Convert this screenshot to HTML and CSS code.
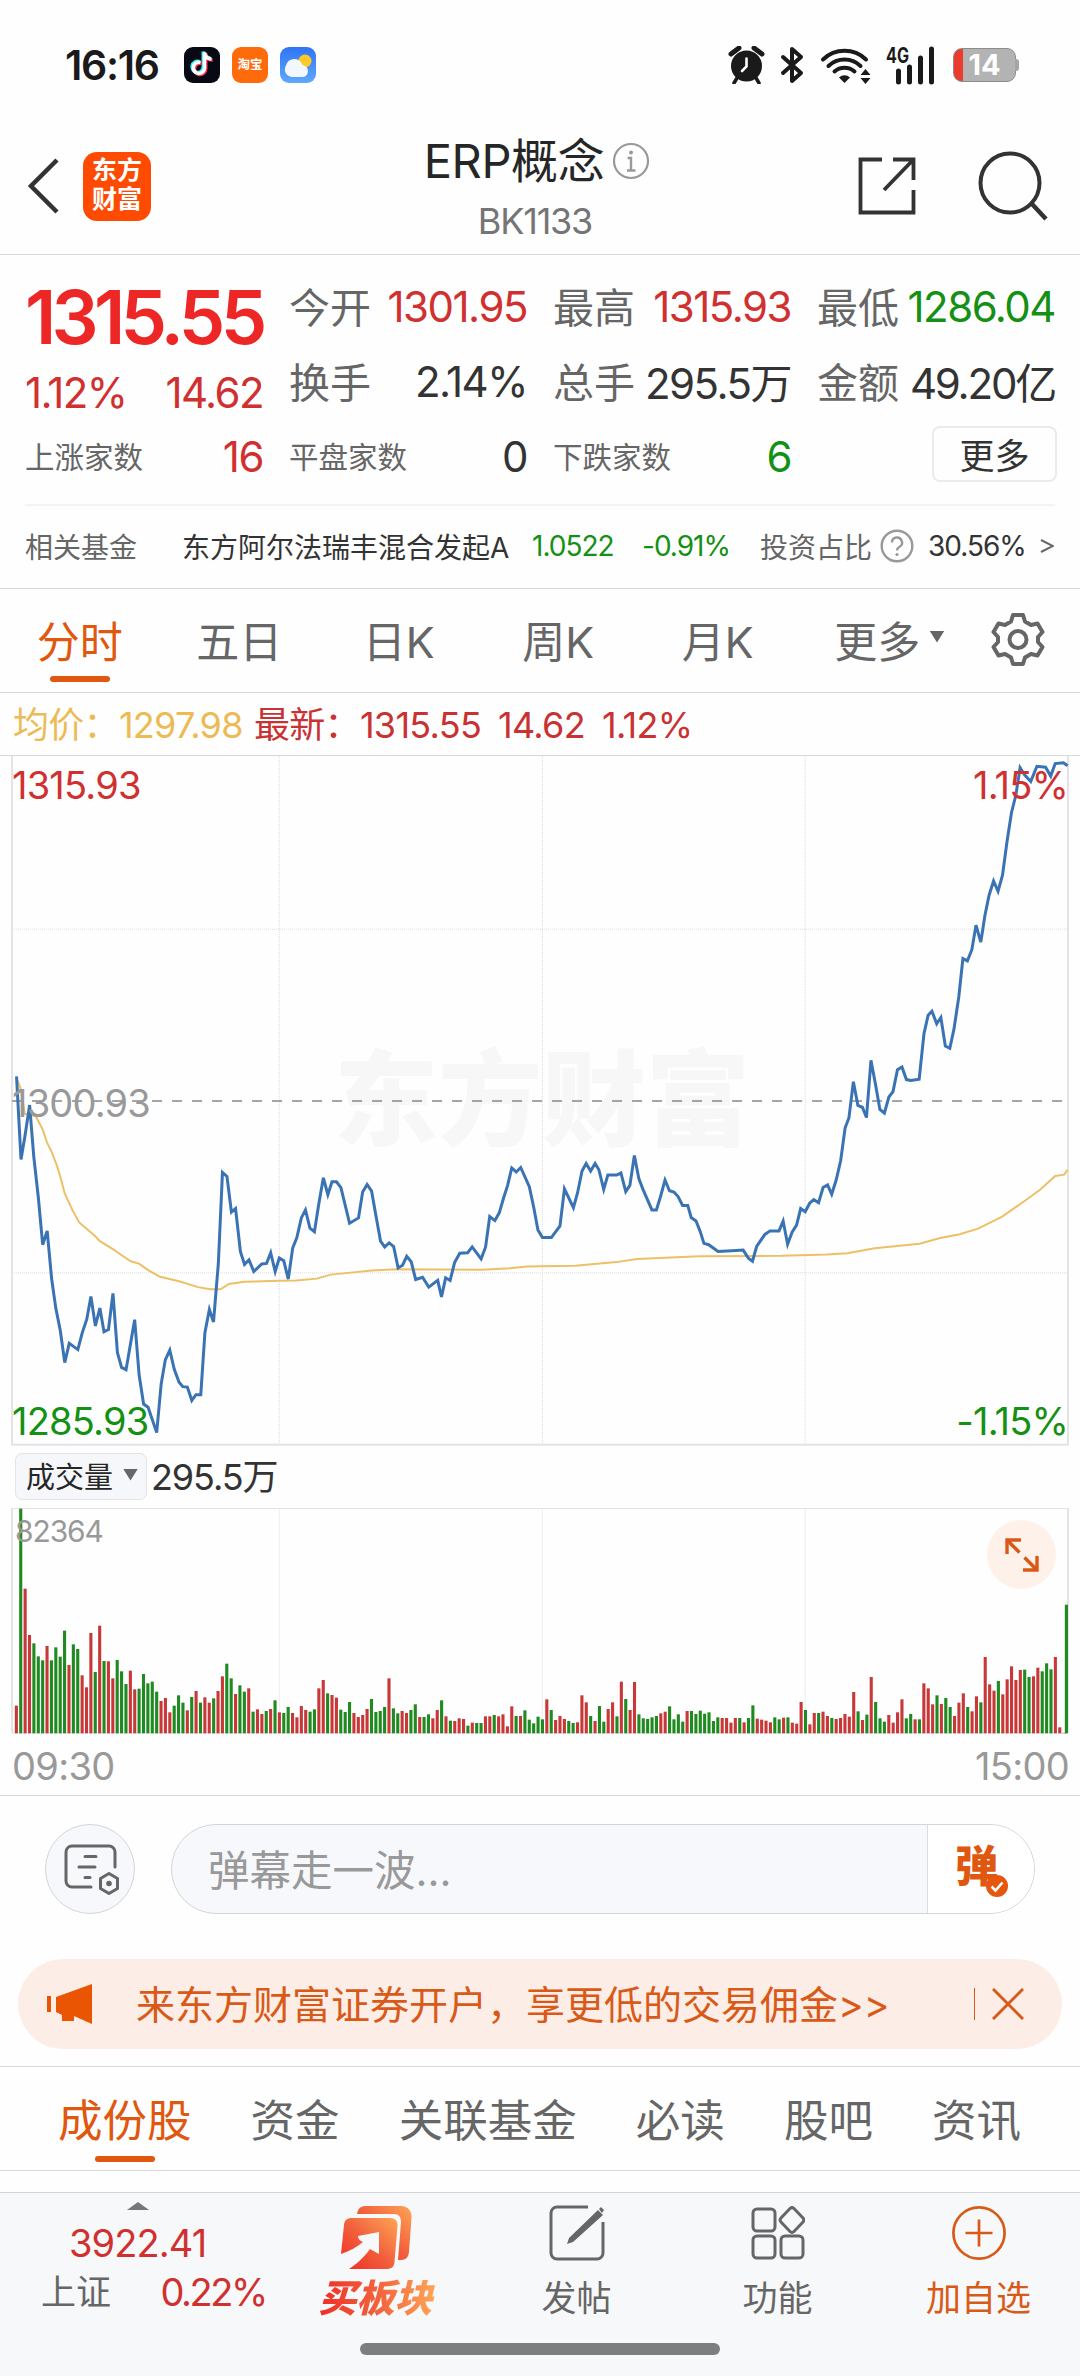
FILE: index.html
```
<!DOCTYPE html>
<html lang="zh-CN">
<head>
  <meta charset="UTF-8">
  <meta name="viewport" content="width=device-width, initial-scale=1.0">
  <title>ERP概念 BK1133</title>
  <link rel="stylesheet" href="styles.css">
</head>
<body>
  <div class="app">
    <div class="status-bar">
      <span class="clock">16:16</span>
      <div class="app-icons">
        <svg width="36" height="36" viewBox="0 0 36 36">
          <rect width="36" height="36" rx="9" fill="#070a14"/>
          <g fill="none" stroke-width="3.6">
            <path d="M16.5 15.500a5.600 5.600 0 1 0 4 5.600V5.500c.5 4 3 6.500 7 6.500" stroke="#25f4ee" transform="translate(-1.200 -1)"/>
            <path d="M16.500 15.500a5.600 5.600 0 1 0 4 5.600V5.500c.5 4 3 6.500 7 6.500" stroke="#fe2c55" transform="translate(1.200 1)"/>
            <path d="M16.500 15.500a5.600 5.600 0 1 0 4 5.600V5.500c.5 4 3 6.500 7 6.500" stroke="#fff"/>
          </g>
        </svg>
        <span class="taobao">淘宝</span>
        <svg width="36" height="36" viewBox="0 0 36 36">
          <defs><linearGradient id="sky" x2="0" y2="1"><stop stop-color="#2f74f5"/><stop offset="1" stop-color="#5fa8fb"/></linearGradient></defs>
          <rect width="36" height="36" rx="9" fill="url(#sky)"/>
          <circle cx="25" cy="14" r="6.500" fill="#ffc928"/>
          <path d="M12 30a7.500 7.500 0 0 1-6-11.500A8.500 8.500 0 0 1 21 15.500c1 1.500 1 2.500 3 3a6 6 0 0 1-1 11.500z" fill="#f3f8ff"/>
        </svg>
      </div>
      <div class="status-right">
        <svg class="alarm" width="37" height="38" viewBox="0 0 37 38">
          <circle cx="18.500" cy="20" r="15.500" fill="#1a1a1a"/>
          <path d="M3 8l8-6M34 8l-8-6" stroke="#1a1a1a" stroke-width="5" stroke-linecap="round"/>
          <path d="M9 32l-3 5M28 32l3 5" stroke="#1a1a1a" stroke-width="3.500" stroke-linecap="round"/>
          <path d="M18.500 12.500v8l-4.500 4.500" fill="none" stroke="#fff" stroke-width="2.600" stroke-linecap="round"/>
        </svg>
        <svg class="bluetooth" width="24" height="38" viewBox="0 0 24 38">
          <path d="M3 11l18 16-9 8V3l9 8L3 27" fill="none" stroke="#1a1a1a" stroke-width="4" stroke-linecap="round" stroke-linejoin="round"/>
        </svg>
        <svg class="wifi" width="52" height="38" viewBox="0 0 52 38">
          <g fill="none" stroke="#1a1a1a" stroke-width="4" stroke-linecap="round">
            <path d="M3 13.500a31 31 0 0 1 43 0"/>
            <path d="M8.500 20a23 23 0 0 1 32 0"/>
            <path d="M14.500 25.500a15 15 0 0 1 20 0"/>
          </g>
          <path d="M19 31.500a8 8 0 0 1 11 0L24.500 37z" fill="#1a1a1a"/>
          <path d="M40.500 29l5-6 5 6zM40.500 32l5 6 5-6z" fill="#1a1a1a"/>
        </svg>
        <svg class="signal" width="50" height="38" viewBox="0 0 50 38">
          <text x="0" y="17" class="signal-label" textLength="23" lengthAdjust="spacingAndGlyphs">4G</text>
          <path d="M12.500 25v11M23.500 21v15M34.500 12v24M45.500 3v33" stroke="#1a1a1a" stroke-width="5" stroke-linecap="round"/>
        </svg>
        <div class="battery"><span>14</span></div>
      </div>
    </div>

    <div class="header">
      <svg class="back" width="34" height="58" viewBox="0 0 34 58"><path d="M31 3L5 29l26 26" fill="none" stroke="#333" stroke-width="4.500"/></svg>
      <div class="logo"><span>东方</span><span>财富</span></div>
      <div class="header-title">
        <div class="title-line">ERP概念
          <svg width="38" height="38" viewBox="0 0 38 38">
            <circle cx="19" cy="19" r="17" fill="none" stroke="#999" stroke-width="2.200"/>
            <circle cx="19" cy="10.500" r="2" fill="#999"/>
            <path d="M15.500 16H19v12M15 28.500h8.500" fill="none" stroke="#999" stroke-width="2.400"/>
          </svg>
        </div>
        <div class="code-line">BK1133</div>
      </div>
      <svg class="share" width="60" height="60" viewBox="0 0 60 60">
        <g fill="none" stroke="#333" stroke-width="3.800">
          <path d="M25 3.500H3.500v53h53V34"/>
          <path d="M36 3.500h20.500V24M56 4L27 34"/>
        </g>
      </svg>
      <svg class="search" width="70" height="70" viewBox="0 0 70 70"><circle cx="32" cy="32" r="29.500" fill="none" stroke="#333" stroke-width="4"/><path d="M54 53l14 15" stroke="#333" stroke-width="4.500"/></svg>
    </div>

    <div class="quote">
      <div class="price-box">
        <div class="price">1315.55</div>
        <div class="change"><span>1.12%</span><span>14.62</span></div>
      </div>
      <div class="stat"><span class="label">今开</span><span class="value red">1301.95</span></div>
      <div class="stat"><span class="label">最高</span><span class="value red">1315.93</span></div>
      <div class="stat"><span class="label">最低</span><span class="value green">1286.04</span></div>
      <div class="stat"><span class="label">换手</span><span class="value">2.14%</span></div>
      <div class="stat"><span class="label">总手</span><span class="value unit">295.5万</span></div>
      <div class="stat"><span class="label">金额</span><span class="value unit tight">49.20亿</span></div>
      <div class="stat small"><span class="label">上涨家数</span><span class="value red">16</span></div>
      <div class="stat small"><span class="label">平盘家数</span><span class="value">0</span></div>
      <div class="stat small"><span class="label">下跌家数</span><span class="value green">6</span></div>
      <div class="stat more"><button class="more-button">更多</button></div>
    </div>

    <div class="fund">
      <span class="fund-label">相关基金</span>
      <span class="fund-name">东方阿尔法瑞丰混合发起A</span>
      <span class="fund-nav green">1.0522</span>
      <span class="fund-rate green">-0.91%</span>
      <span class="fund-share">投资占比</span>
      <svg class="help" width="34" height="34" viewBox="0 0 34 34">
        <circle cx="17" cy="17" r="15.300" fill="none" stroke="#999" stroke-width="2.400"/>
        <path d="M12 13.500a5 5 0 1 1 7.500 4.300c-2 1.200-2.500 2-2.500 3.700" fill="none" stroke="#999" stroke-width="2.400"/>
        <circle cx="17" cy="25.500" r="1.600" fill="#999"/>
      </svg>
      <span class="fund-percent">30.56%</span>
      <svg class="fund-arrow" width="14" height="16" viewBox="0 0 14 16"><path d="M1 2l12 6-12 6" fill="none" stroke="#666" stroke-width="2"/></svg>
    </div>

    <div class="period-tabs">
      <span class="tab active">分时</span>
      <span class="tab">五日</span>
      <span class="tab">日K</span>
      <span class="tab">周K</span>
      <span class="tab">月K</span>
      <span class="tab">更多<i class="caret"></i></span>
      <svg class="gear" width="54" height="54" viewBox="0 0 54 54">
        <g fill="none" stroke="#666" stroke-width="4" stroke-linejoin="round">
          <path d="M22 3h10l2 6.500 6 3.500 6.500-1.500 5 8.500-4.500 5v5l4.500 5-5 8.500-6.500-1.500-6 3.500-2 6.500H22l-2-6.500-6-3.500-6.500 1.500-5-8.500L7 30v-5l-4.500-5 5-8.500L14 13l6-3.500z"/>
          <circle cx="27" cy="27.500" r="8.500"/>
        </g>
      </svg>
    </div>

    <div class="legend">
      <span class="legend-avg">均价：1297.98</span>
      <span class="legend-last">最新：<span>1315.55</span><span>14.62</span><span>1.12%</span></span>
    </div>

    <div class="price-chart">
      <div class="watermark">东方财富</div>
      <svg class="chart-svg" viewBox="0 13 3136 1546" preserveAspectRatio="none">
        <g class="grid">
          <path d="M811 13V1556M1575 13V1556M2338 13V1556M35 401H3100M35 1171H3100"/>
        </g>
        <path class="frame" d="M35 13V1556H3101V13"/>
        <path class="base-line" d="M35 786H3100"/>
        <polyline class="avg-line" id="avgLine"/>
        <polyline class="price-line" id="priceLine"/>
      </svg>
      <span class="mark top-left red">1315.93</span>
      <span class="mark top-right red">1.15%</span>
      <span class="mark mid-left">1300.93</span>
      <span class="mark bottom-left green">1285.93</span>
      <span class="mark bottom-right green">-1.15%</span>
    </div>

    <div class="volume-bar">
      <button class="volume-select">成交量<i class="caret"></i></button>
      <span class="volume-total">295.5万</span>
    </div>
    <div class="volume-chart">
      <svg class="chart-svg" viewBox="0 204 3136 678" preserveAspectRatio="none">
        <g class="grid"><path d="M811 205V879M1575 205V879M2338 205V879"/></g>
        <path class="frame thin" d="M35 205.500H3101M35 879H3101"/>
        <path class="frame" d="M35 205V879M3101 205V879"/>
        <g id="volumeBars"></g>
      </svg>
      <span class="volume-max">82364</span>
      <div class="expand">
        <svg width="34" height="34" viewBox="0 0 34 34"><path d="M2 16V2h14M2.500 2.500l12 12M32 18v14H18M31.500 31.500l-12-12" fill="none" stroke="#d95a18" stroke-width="3.400"/></svg>
      </div>
    </div>
    <div class="time-axis"><span>09:30</span><span>15:00</span></div>

    <div class="barrage">
      <div class="barrage-setting">
        <svg width="56" height="52" viewBox="0 0 56 52">
          <g fill="none" stroke="#666" stroke-width="3" stroke-linecap="round" stroke-linejoin="round">
            <path d="M28 43H9a6 6 0 0 1-6-6V8a6 6 0 0 1 6-6h37a6 6 0 0 1 6 6v15"/>
            <path d="M22 12.500h11M16 23h16M22 33.500h5"/>
            <path d="M46 29.500l8.500 5v10L46 49.500l-8.500-5v-10z"/>
          </g>
          <circle cx="46" cy="39.500" r="2.800" fill="#666"/>
        </svg>
      </div>
      <div class="barrage-input">
        <span class="placeholder">弹幕走一波...</span>
        <div class="barrage-switch">弹
          <svg class="check" width="24" height="24" viewBox="0 0 24 24"><circle cx="12" cy="12" r="11" fill="#e6560c"/><path d="M6.500 12.500l4 4 7-8" fill="none" stroke="#fff" stroke-width="2.600"/></svg>
        </div>
      </div>
    </div>

    <div class="banner">
      <svg class="horn" width="46" height="40" viewBox="0 0 46 40"><path d="M0 12h4v16H0zM9 13L45 0v40L27 32v5h-12v-6l-6-3z" fill="#ea5504"/></svg>
      <span class="banner-text">来东方财富证券开户，享更低的交易佣金&gt;&gt;</span>
      <svg class="close" width="32" height="32" viewBox="0 0 32 32"><path d="M1 1l30 30M31 1L1 31" stroke="#d95a18" stroke-width="3"/></svg>
    </div>

    <div class="content-tabs">
      <span class="tab active">成份股</span>
      <span class="tab">资金</span>
      <span class="tab">关联基金</span>
      <span class="tab">必读</span>
      <span class="tab">股吧</span>
      <span class="tab">资讯</span>
    </div>

    <div class="bottom-bar">
      <div class="index-box">
        <i class="up-caret"></i>
        <div class="index-value">3922.41</div>
        <div class="index-line"><span>上证</span><span class="index-rate">0.22%</span></div>
      </div>
      <div class="nav-item buy">
        <svg width="72" height="66" viewBox="0 0 72 66">
          <defs><linearGradient id="buy" x1="0" y1="1" x2="1" y2="0"><stop stop-color="#ee2b24"/><stop offset=".5" stop-color="#f2603c"/><stop offset="1" stop-color="#ffa556"/></linearGradient></defs>
          <path d="M17 9c1-6 4-8 9-8h35c7 0 11 5 10.500 12L69 47c-.5 5-3 8-8 8h-3l3-38c0-5-2-8-7-8z" fill="url(#buy)"/>
          <path d="M4 20c.5-5 3-7 8-7h38c5 0 8 3 7.500 8l-3 36c-.5 5-3 7-8 7H9c9-6 15-12 21-20l9 5V27l-21 4c0 3 2 5 5 6C17 42 10 46 1 49z" fill="url(#buy)"/>
        </svg>
        <span class="buy-text">买板块</span>
      </div>
      <div class="nav-item post">
        <svg width="56" height="56" viewBox="0 0 56 56"><path d="M39 2H8a6 6 0 0 0-6 6v40a6 6 0 0 0 6 6h40a6 6 0 0 0 6-6V17" fill="none" stroke="#666" stroke-width="3"/><path d="M49 5l5 5-30 27-6 2 2-6zM50 4l2-2 3 3-2 3z" fill="#666"/></svg>
        <span>发帖</span>
      </div>
      <div class="nav-item func">
        <svg width="54" height="54" viewBox="0 0 54 54"><g fill="none" stroke="#666" stroke-width="3"><rect x="2" y="3" width="22" height="22" rx="4"/><rect x="2" y="30" width="22" height="22" rx="4"/><rect x="30" y="30" width="22" height="22" rx="4"/><path d="M39 2.500a3 3 0 0 1 4 0l9 9.500a3 3 0 0 1 0 4l-9 9.500a3 3 0 0 1-4 0L30 16a3 3 0 0 1 0-4z"/></g></svg>
        <span>功能</span>
      </div>
      <div class="nav-item add">
        <svg width="58" height="58" viewBox="0 0 58 58"><g fill="none" stroke="#d95a18" stroke-width="2.800"><circle cx="29" cy="29" r="26.500"/><path d="M29 15v28M15 29h28"/></g></svg>
        <span>加自选</span>
      </div>
      <div class="home-indicator"></div>
    </div>
  </div>

  <script>
    const price = `48,731 61,917 73,862 86,795 98,910 111,1000 124,1108 137,1077 150,1185 162,1250 175,1300 188,1372
      201,1329 226,1343 239,1305 252,1275 264,1224 277,1290 290,1250 302,1303 315,1298 328,1217 341,1350 353,1383
      366,1388 391,1276 404,1400 417,1465 430,1472 455,1529 468,1420 480,1366 493,1344 506,1387 520,1416 531,1426
      544,1427 557,1457 569,1444 583,1444 595,1305 608,1253 620,1281 634,1150 646,946 659,955 672,1035 684,1027
      698,1123 710,1152 723,1142 737,1168 760,1151 774,1150 786,1126 799,1168 811,1138 824,1144 837,1185 850,1115
      862,1092 875,1048 887,1030 900,1071 913,1079 926,1015 939,958 952,996 964,967 977,967 990,980 1015,1060
      1041,1048 1053,990 1066,973 1079,988 1092,1045 1105,1100 1117,1113 1130,1104 1143,1112 1156,1160 1169,1154
      1181,1134 1194,1146 1207,1186 1227,1181 1245,1203 1271,1188 1282,1225 1294,1182 1307,1188 1320,1148 1335,1127
      1358,1126 1371,1113 1397,1140 1410,1113 1422,1045 1437,1054 1450,1036 1462,1004 1474,975 1486,936 1499,945
      1512,935 1537,978 1550,1025 1562,1075 1575,1092 1601,1092 1626,1066 1639,983 1665,1025 1677,992 1690,943
      1702,926 1715,943 1728,926 1739,940 1753,984 1765,952 1791,952 1803,947 1817,989 1829,975 1842,908 1855,960
      1867,984 1893,1030 1906,1030 1918,1000 1931,963 1944,987 1957,990 1969,1000 1982,1020 1997,1020 2007,1047
      2021,1055 2033,1078 2044,1105 2058,1108 2085,1123 2138,1121 2158,1120 2173,1138 2185,1145 2197,1112 2221,1085
      2236,1077 2262,1077 2274,1055 2287,1107 2300,1080 2313,1064 2325,1027 2338,1034 2351,1015 2363,1007 2377,1014
      2390,980 2403,974 2415,995 2428,963 2441,920 2454,846 2465,824 2478,743 2491,796 2504,800 2516,823 2529,695
      2542,748 2555,805 2568,813 2581,777 2593,765 2606,716 2619,710 2632,738 2645,740 2669,737 2683,635 2695,594
      2706,585 2720,613 2732,599 2745,663 2758,668 2770,625 2784,553 2796,467 2809,472 2822,447 2834,392 2848,430
      2860,370 2872,325 2885,293 2898,316 2911,280 2924,205 2937,140 2950,100 2962,39 2975,55 2993,70 3011,36
      3036,38 3051,58 3064,30 3088,28 3100,35`;

    const average = `48,736 60,758 72,815 104,820 124,850 137,880 150,900 165,930 175,955 188,993 210,1030 230,1058
      275,1088 290,1100 330,1119 350,1130 380,1145 405,1151 430,1165 465,1180 520,1190 575,1203 610,1208 640,1208
      665,1196 710,1191 810,1189 860,1188 920,1184 960,1175 1080,1166 1150,1163 1400,1164 1480,1161 1530,1157
      1670,1155 1790,1147 1850,1140 2030,1134 2270,1133 2400,1130 2460,1127 2540,1116 2670,1106 2730,1093 2784,1085
      2840,1072 2910,1045 2975,1010 3020,985 3064,954 3090,951 3100,940`;

    // r = up minute, g = down minute, number = top of the bar
    const volume = `r797 g206 r446 r585 g610 g649 g661 r618 g661 g622 g650 g572 r675 g613 g627 r706 r742 r579 g696 r557
      g663 r664 r715 g660 g694 g732 r692 r748 g746 g702 g730 g725 g755 r783 r774 r817 g797 g766 g788 r811
      g771 r753 g788 r772 r788 g775 r753 r709 g671 g715 r762 g736 g755 r745 g815 r808 r822 g813 r807 g781
      r817 g819 g801 r819 r832 r798 r810 g815 g808 r745 r720 g760 r765 r773 g809 g816 g786 r819 r831 r825
      r807 g777 g816 g813 g801 r715 g805 g820 r813 r819 g810 g793 r831 g831 g823 r835 r810 g781 r829 g842
      r843 r835 r837 g857 r848 g849 g849 r829 r829 g825 r829 r823 r859 r799 g828 r828 g811 g839 g850 g830
      g838 r778 g810 r840 r828 r837 g843 g849 r847 r766 r787 g828 r843 g798 g845 r807 r787 g829 r725 g777
      r810 r726 g823 g835 g837 g832 g828 r820 r815 g799 g838 g823 g845 r813 g813 g822 g812 g821 g817 g843
      g832 r834 r834 r848 r834 g834 r847 g834 g796 r836 r839 r842 r847 g832 g838 r833 g832 r848 r851 r786
      g810 r853 r819 g819 r815 r828 g834 r837 r834 r822 r830 r756 g814 r840 g824 r711 g786 g835 g845 r825
      r848 r817 r778 g835 g822 r838 g838 r730 r745 r793 g766 r792 g774 g801 r828 r788 r760 g801 r814 r769
      g787 r651 r733 r752 g723 r763 r718 r679 r720 r690 g689 g711 r709 r683 g694 g670 g688 r651 r862 r879
      g494`;

    document.getElementById('priceLine').setAttribute('points', price);
    document.getElementById('avgLine').setAttribute('points', average);

    const bars = volume.split(/\s+/).map((item, i) => {
      const top = Number(item.slice(1));
      const x = Math.min(43 + i * 12.73, 3092);
      return `<rect class="${item[0] === 'r' ? 'bar-up' : 'bar-down'}" x="${x.toFixed(1)}" y="${top}" width="9" height="${880 - top}"/>`;
    });
    document.getElementById('volumeBars').innerHTML = bars.join('');
  </script>
</body>
</html>
```

FILE: styles.css
```
* {
  box-sizing: border-box;
}

body {
  margin: 0;
  background-color: #fefefe;
  color: #333;
  font-family: Inter, "Noto Sans CJK SC", sans-serif;
}

svg {
  display: block;
  flex-shrink: 0;
}

.app {
  width: 1080px;
  height: 2376px;
  display: flex;
  flex-direction: column;
  overflow: hidden;
}

.red {
  color: #d03030;
}

.green {
  color: #149014;
}

/* status bar */
.status-bar {
  height: 118px;
  padding: 12px 60px 0 65px;
  display: flex;
  align-items: center;
}

.clock {
  width: 119px;
  font-size: 41px;
  font-weight: 600;
  letter-spacing: -1.3px;
  color: #1a1a1a;
}

.app-icons {
  display: flex;
  gap: 12px;
}

.taobao {
  width: 36px;
  height: 36px;
  border-radius: 9px;
  background-color: #ff6a0a;
  color: #fff;
  font-size: 12.5px;
  font-weight: 700;
  line-height: 35px;
  text-align: center;
}

.status-right {
  display: flex;
  align-items: center;
  margin-left: auto;
}

.bluetooth {
  margin-left: 15px;
}

.wifi {
  margin-left: 16px;
}

.signal {
  margin-left: 14px;
  overflow: visible;
}

.signal-label {
  font-size: 21px;
  font-weight: 700;
  fill: #1a1a1a;
}

.battery {
  position: relative;
  width: 63px;
  height: 34px;
  margin: 0 4px 0 17px;
  border: 1px solid #8c8c8c;
  border-radius: 9px;
  background: linear-gradient(to right, #ea3b2e 9px, #b3b3b3 9px);
  color: #fff;
  font-size: 29px;
  font-weight: 700;
  line-height: 32px;
  text-align: center;
}

.battery::after {
  content: "";
  position: absolute;
  right: -4px;
  top: 10px;
  width: 4px;
  height: 12px;
  border-radius: 0 3px 3px 0;
  background-color: #a5a5a5;
}

/* header */
.header {
  height: 137px;
  padding: 0 32px 0 26px;
  display: flex;
  align-items: center;
  border-bottom: 1px solid #d9d9d9;
}

.logo {
  width: 68px;
  height: 69px;
  margin-left: 23px;
  padding-bottom: 3px;
  border-radius: 14px;
  background-color: #ff4a02;
  color: #fff;
  display: flex;
  flex-direction: column;
  align-items: center;
  justify-content: center;
  font-size: 25px;
  font-weight: 600;
  line-height: 29px;
}

.header-title {
  flex: 1;
  padding: 4px 0 0 66px;
  display: flex;
  flex-direction: column;
  align-items: center;
}

.title-line {
  display: flex;
  align-items: center;
  gap: 8px;
  height: 64px;
  font-size: 47px;
  line-height: 60px;
  letter-spacing: -0.4px;
  color: #262626;
}

.code-line {
  height: 54px;
  padding-right: 4px;
  line-height: 56px;
  font-size: 36px;
  letter-spacing: -1.2px;
  color: #757575;
}

.search {
  margin-left: 61px;
}

/* quote */
.quote {
  display: grid;
  grid-template-columns: repeat(4, 238px);
  grid-template-rows: repeat(3, 75px);
  column-gap: 26px;
  margin: 0 25px;
  padding: 14px 0 10px;
  border-bottom: 2px solid #f3f3f5;
}

.price-box {
  grid-row: span 2;
  padding-top: 10px;
}

.price {
  height: 76px;
  line-height: 76px;
  font-size: 74px;
  font-weight: 600;
  letter-spacing: -4.7px;
  color: #ed2626;
}

.change {
  height: 74px;
  display: flex;
  justify-content: space-between;
  align-items: center;
  font-size: 42px;
  letter-spacing: -1.6px;
  color: #d03030;
}

.stat {
  display: flex;
  justify-content: space-between;
  align-items: center;
  white-space: nowrap;
}

.stat .label {
  margin-top: -4px;
  font-size: 41px;
  color: #666;
}

.stat .value {
  font-size: 42px;
  letter-spacing: -1.5px;
}

.stat .unit {
  margin-top: -3px;
}

.stat .tight {
  letter-spacing: -2.2px;
}

.stat.small .label {
  font-size: 29.5px;
}

.stat.more {
  justify-content: flex-end;
  margin-right: -2px;
}

.more-button {
  width: 125px;
  height: 56px;
  margin-top: -5px;
  padding: 0 0 5px;
  border: 2px solid #ebebee;
  border-radius: 8px;
  background: none;
  color: #333;
  font-family: inherit;
  font-size: 35px;
}

/* related fund */
.fund {
  height: 83px;
  padding: 0 26px 3px 25px;
  display: flex;
  align-items: center;
  border-bottom: 1px solid #d9d9d9;
  font-size: 28px;
  white-space: nowrap;
}

.fund-label {
  width: 157px;
  color: #666;
}

.fund-name {
  width: 350px;
}

.fund-nav {
  width: 110px;
  letter-spacing: -1px;
}

.fund-rate {
  width: 118px;
  letter-spacing: -1px;
}

.fund-share {
  color: #666;
}

.help {
  margin-left: 8px;
}

.fund-percent {
  margin-left: 14px;
  letter-spacing: -1px;
}

.fund-arrow {
  margin-left: auto;
}

/* period tabs */
.period-tabs,
.content-tabs {
  display: flex;
  align-items: center;
  border-bottom: 1px solid #d9d9d9;
  color: #666;
}

.period-tabs {
  height: 104px;
  padding-bottom: 4px;
  font-size: 43px;
}

.period-tabs .tab {
  width: 159.5px;
  text-align: center;
}

.tab {
  position: relative;
}

.tab.active {
  color: #e0570f;
}

.tab.active::after {
  content: "";
  position: absolute;
  left: 50%;
  bottom: -12px;
  width: 60px;
  height: 6px;
  margin-left: -30px;
  border-radius: 3px;
  background-color: #e0570f;
}

.caret {
  width: 15px;
  height: 12px;
  background-color: #666;
  clip-path: polygon(0 0, 100% 0, 50% 100%);
}

.tab .caret {
  position: absolute;
  left: 132px;
  top: 23px;
}

.gear {
  margin-left: 34px;
}

/* legend */
.legend {
  height: 62px;
  padding: 0 0 4px 13px;
  display: flex;
  align-items: center;
  font-size: 36px;
  letter-spacing: -0.7px;
}

.legend-avg {
  width: 241px;
  color: #ecbb55;
}

.legend-last {
  display: flex;
  align-items: baseline;
  color: #c93232;
}

.legend-last span {
  margin-right: 17px;
}

/* price chart */
.price-chart {
  position: relative;
  height: 691px;
  border-top: 1px solid #d9d9d9;
}

.chart-svg {
  position: relative;
  width: 1080px;
  height: 100%;
}

.chart-svg path,
.chart-svg polyline {
  fill: none;
  vector-effect: non-scaling-stroke;
}

.grid path {
  stroke: #dcdcdc;
  stroke-width: 1;
  stroke-dasharray: 1 1;
}

.chart-svg .frame {
  stroke: #e3e3e6;
  stroke-width: 2;
}

.chart-svg .frame.thin {
  stroke-width: 1;
}

.chart-svg .base-line {
  stroke: #888;
  stroke-width: 1.5;
  stroke-dasharray: 10 10;
}

.chart-svg .avg-line {
  stroke: #edc066;
  stroke-width: 2;
}

.chart-svg .price-line {
  stroke: #3a73b3;
  stroke-width: 3;
}

.watermark {
  position: absolute;
  left: 334px;
  top: 269px;
  font-size: 104px;
  font-weight: 900;
  line-height: 150px;
  color: #f7f7f7;
}

.mark {
  position: absolute;
  font-size: 38px;
  line-height: 46px;
  letter-spacing: -0.8px;
}

.top-left {
  left: 12px;
  top: 6px;
}

.top-right {
  right: 12px;
  top: 6px;
}

.mid-left {
  left: 12px;
  top: 324px;
  color: #999;
}

.bottom-left {
  left: 12px;
  bottom: 2px;
}

.bottom-right {
  right: 12px;
  bottom: 2px;
}

/* volume */
.volume-bar {
  height: 62px;
  padding: 0 0 2px 15px;
  display: flex;
  align-items: center;
  gap: 4px;
  font-size: 36px;
  letter-spacing: -1.1px;
}

.volume-total {
  margin-top: -4px;
}

.volume-select {
  width: 132px;
  height: 47px;
  padding: 0 8px 3px 10px;
  display: flex;
  align-items: center;
  justify-content: space-between;
  border: 1px solid #e4e4e8;
  border-radius: 7px;
  background-color: #f6f7fa;
  color: #262626;
  font-family: inherit;
  font-size: 29px;
}

.volume-chart {
  position: relative;
  height: 226px;
}

.volume-chart .chart-svg {
  height: 226px;
}

.bar-up {
  fill: #c93838;
}

.bar-down {
  fill: #1f8a1f;
}

.volume-max {
  position: absolute;
  left: 15px;
  top: 5px;
  font-size: 30px;
  letter-spacing: -1.1px;
  color: #999;
}

.expand {
  position: absolute;
  right: 24px;
  top: 12px;
  width: 69px;
  height: 69px;
  display: flex;
  align-items: center;
  justify-content: center;
  border-radius: 50%;
  background-color: #fef1ea;
}

.time-axis {
  height: 62px;
  padding: 3px 11px 0 12px;
  display: flex;
  justify-content: space-between;
  align-items: center;
  border-bottom: 1px solid #d9d9d9;
  font-size: 38px;
  letter-spacing: -0.7px;
  color: #999;
}

/* barrage */
.barrage {
  padding: 28px 45px 45px;
  display: flex;
  gap: 36px;
}

.barrage-setting {
  width: 90px;
  height: 90px;
  padding: 2px 0 0 2px;
  display: flex;
  align-items: center;
  justify-content: center;
  border: 1px solid #d3d5da;
  border-radius: 50%;
  background-color: #f7f8fb;
}

.barrage-input {
  flex: 1;
  height: 90px;
  padding-left: 36px;
  display: flex;
  align-items: center;
  justify-content: space-between;
  border: 1px solid #d3d5da;
  border-radius: 45px;
  background-color: #f7f8fb;
  overflow: hidden;
}

.placeholder {
  margin-top: -3px;
  font-size: 41.5px;
  color: #999;
}

.barrage-switch {
  position: relative;
  width: 107px;
  height: 88px;
  padding-left: 27px;
  border-left: 1px solid #dcdde2;
  background-color: #fff;
  color: #e0570f;
  font-size: 43px;
  font-weight: 900;
  line-height: 82px;
}

.check {
  position: absolute;
  left: 57px;
  top: 49px;
}

/* banner */
.banner {
  height: 90px;
  margin: 0 18px 17px;
  padding: 0 38px 0 29px;
  display: flex;
  align-items: center;
  border-radius: 45px;
  background-color: #fceee6;
}

.banner-text {
  width: 837px;
  margin: -4px 0 0 43px;
  font-size: 39px;
  color: #d95a18;
}

.close {
  margin-left: auto;
  box-sizing: content-box;
  padding-left: 17px;
  border-left: 1px solid #d95a18;
}

/* content tabs */
.content-tabs {
  height: 105px;
  padding: 0 59px 3px 58px;
  justify-content: space-between;
  border-top: 1px solid #d9d9d9;
  font-size: 44.5px;
}

/* bottom bar */
.bottom-bar {
  position: relative;
  flex: 1;
  margin-top: 21px;
  display: flex;
  border-top: 1px solid #d5d5d9;
  background-color: #f7f8fa;
  color: #666;
  font-size: 35px;
}

.index-box {
  width: 275px;
  padding: 9px 9px 0 41px;
}

.up-caret {
  display: block;
  width: 22px;
  height: 8px;
  margin-left: 86px;
  background-color: #777;
  clip-path: polygon(50% 0, 100% 100%, 0 100%);
}

.index-value {
  height: 50px;
  margin-top: 8px;
  padding-left: 28px;
  line-height: 50px;
  font-size: 38px;
  letter-spacing: -0.9px;
  color: #d03030;
}

.index-line {
  display: flex;
  justify-content: space-between;
  line-height: 48px;
}

.index-rate {
  font-size: 38px;
  letter-spacing: -2.4px;
  color: #d03030;
}

.nav-item {
  width: 201px;
  padding-top: 12px;
  display: flex;
  flex-direction: column;
  align-items: center;
}

.nav-item svg {
  height: 56px;
  margin-bottom: 12px;
}

.nav-item span {
  line-height: 50px;
}

.nav-item.buy svg {
  height: 66px;
  margin-bottom: 2px;
}

.nav-item .buy-text {
  padding: 0 3px;
  background: linear-gradient(to right, #ee2b24, #f2603c 50%, #ffa556);
  -webkit-background-clip: text;
  background-clip: text;
  color: transparent;
  font-size: 38px;
  font-style: italic;
  font-weight: 900;
}

.nav-item.add {
  color: #d95a18;
}

.home-indicator {
  position: absolute;
  left: 360px;
  bottom: 21px;
  width: 360px;
  height: 12px;
  border-radius: 6px;
  background-color: #7d7e80;
}
```
